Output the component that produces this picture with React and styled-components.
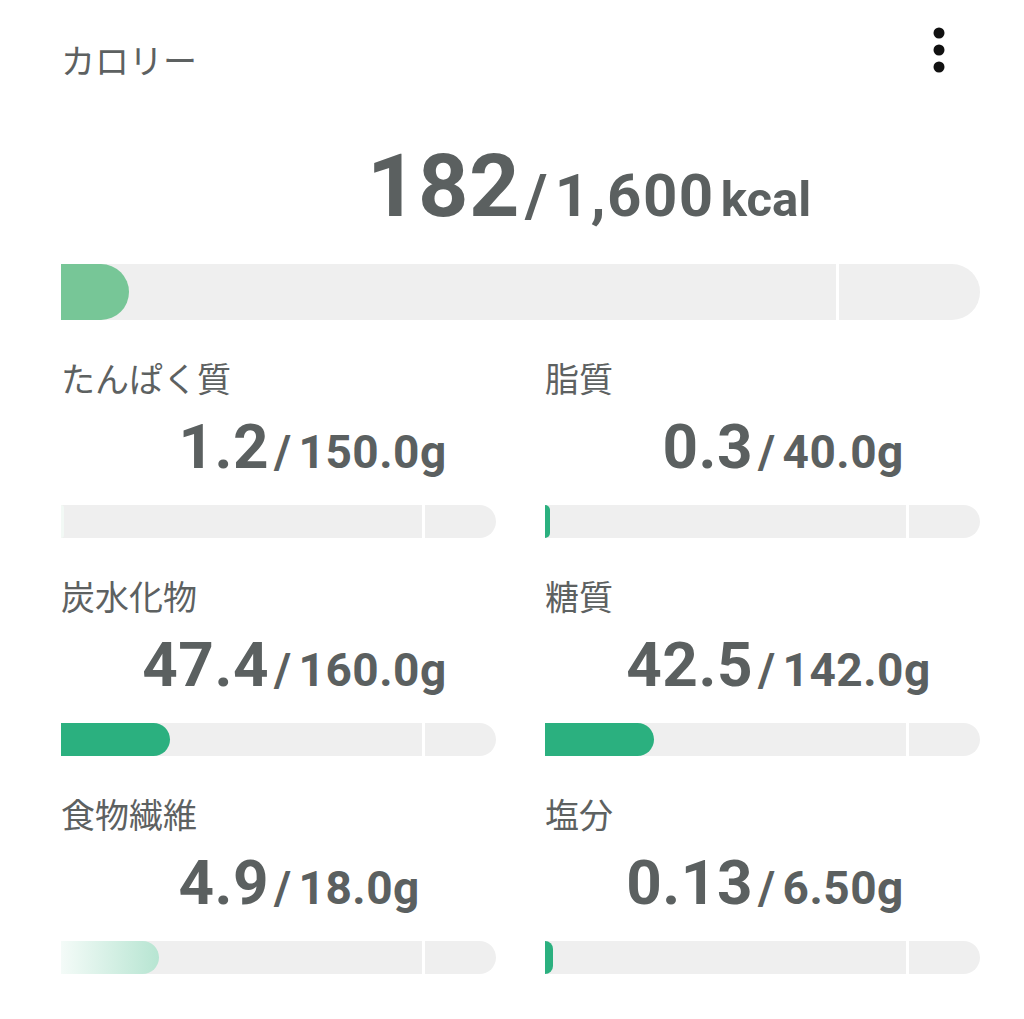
import React from "react"
import styled, { createGlobalStyle } from "styled-components"

const GlobalStyle = createGlobalStyle`
  html, body {
    margin: 0;
    padding: 0;
    background: #ffffff;
  }
  body {
    font-family: "Noto Sans CJK JP", "Noto Sans", sans-serif;
    color: #5d6161;
  }
`

const Page = styled.div`
  width: 1024px;
  min-height: 1019px;
  box-sizing: border-box;
  padding: 0 44px 0 61px;
  background: #fff;
`

const Header = styled.div`
  display: flex;
  justify-content: space-between;
  align-items: flex-start;
  height: 142px;
`

const Title = styled.h1`
  margin: 36px 0 0 0;
  font-size: 34px;
  font-weight: 400;
  line-height: 48px;
  color: #5d6161;
  font-family: "Noto Sans CJK JP", sans-serif;
`

const MenuButton = styled.button`
  border: none;
  background: none;
  padding: 0;
  margin: 22px 33px 0 0;
  width: 16px;
  height: 56px;
  display: flex;
  align-items: center;
  justify-content: center;
  cursor: pointer;
`

const Amount = styled.div`
  display: grid;
  grid-template-columns: ${(p) => p.$split}px 1fr;
  align-items: baseline;
  font-family: Roboto, "Liberation Sans", sans-serif;
  font-weight: 700;
  color: #5b6060;
`

const Value = styled.span`
  text-align: right;
  font-size: ${(p) => p.$size}px;
  line-height: 1;
  letter-spacing: 0.5px;
`

const Target = styled.span`
  font-size: ${(p) => p.$size}px;
  line-height: 1;
  white-space: nowrap;
  letter-spacing: ${(p) => p.$spacing}px;
`

const Slash = styled.span`
  margin: 0 ${(p) => p.$right}px 0 ${(p) => p.$left}px;
`

const Unit = styled.span`
  font-size: ${(p) => p.$size}px;
  letter-spacing: 0;
  margin-left: 6px;
`

const Track = styled.div`
  position: relative;
  height: ${(p) => p.$height}px;
  background: #efefef;
  border-radius: 0 ${(p) => p.$height / 2}px ${(p) => p.$height / 2}px 0;
  overflow: hidden;
`

const Fill = styled.div`
  height: 100%;
  background: ${(p) => p.$color};
  border-radius: 0 ${(p) => p.$height / 2}px ${(p) => p.$height / 2}px 0;
`

const Marker = styled.div`
  position: absolute;
  top: 0;
  bottom: 0;
  left: ${(p) => p.$at}%;
  width: 3px;
  background: #ffffff;
`

const TopSection = styled.section`
  display: flex;
  flex-direction: column;
  gap: 34px;
`

const Grid = styled.div`
  display: grid;
  grid-template-columns: 1fr 1fr;
  column-gap: 49px;
  row-gap: 36px;
  margin-top: 36px;
`

const Nutrient = styled.div`
  display: flex;
  flex-direction: column;
`

const Label = styled.div`
  font-size: 34px;
  line-height: 44px;
  color: #5d6161;
`

const NutrientAmount = styled.div`
  margin-top: 16px;
  margin-bottom: 27px;
`

const KebabIcon = () => (
  <svg width="14" height="50" viewBox="0 0 14 50">
    <circle cx="7" cy="8" r="5.5" fill="#111" />
    <circle cx="7" cy="25" r="5.5" fill="#111" />
    <circle cx="7" cy="42" r="5.5" fill="#111" />
  </svg>
)

const ProgressBar = ({ height, percent, color, marker }) => (
  <Track $height={height}>
    <Fill $height={height} $color={color} style={{ width: `${percent}%` }} />
    <Marker $at={marker} />
  </Track>
)

const nutrients = [
  { label: "たんぱく質", value: "1.2", target: "150.0g", percent: 0.7, color: "#f2f9f5" },
  { label: "脂質", value: "0.3", target: "40.0g", percent: 1.2, color: "#2bb07f" },
  { label: "炭水化物", value: "47.4", target: "160.0g", percent: 25, color: "#2bb07f" },
  { label: "糖質", value: "42.5", target: "142.0g", percent: 25, color: "#2bb07f" },
  { label: "食物繊維", value: "4.9", target: "18.0g", percent: 22.6, color: "linear-gradient(90deg, #f4fbf8 0%, #b7e5d2 100%)" },
  { label: "塩分", value: "0.13", target: "6.50g", percent: 1.8, color: "#2bb07f" },
]

const App = () => {
  return (
    <Page>
      <GlobalStyle />
      <Header>
        <Title>カロリー</Title>
        <MenuButton aria-label="メニュー">
          <KebabIcon />
        </MenuButton>
      </Header>

      <TopSection>
        <Amount $split={459}>
          <Value $size={88}>182</Value>
          <Target $size={60} $spacing={1.5}>
            <Slash $left={5} $right={6}>/</Slash>1,600
            <Unit $size={49}>kcal</Unit>
          </Target>
        </Amount>
        <ProgressBar height={56} percent={7.4} color="#77c697" marker={84.3} />
      </TopSection>

      <Grid>
        {nutrients.map((n) => (
          <Nutrient key={n.label}>
            <Label>{n.label}</Label>
            <NutrientAmount>
              <Amount $split={208}>
                <Value $size={62}>{n.value}</Value>
                <Target $size={46} $spacing={0.5}>
                  <Slash $left={5} $right={7}>/</Slash>
                  {n.target}
                </Target>
              </Amount>
            </NutrientAmount>
            <ProgressBar height={33} percent={n.percent} color={n.color} marker={83} />
          </Nutrient>
        ))}
      </Grid>
    </Page>
  )
}

export default App
